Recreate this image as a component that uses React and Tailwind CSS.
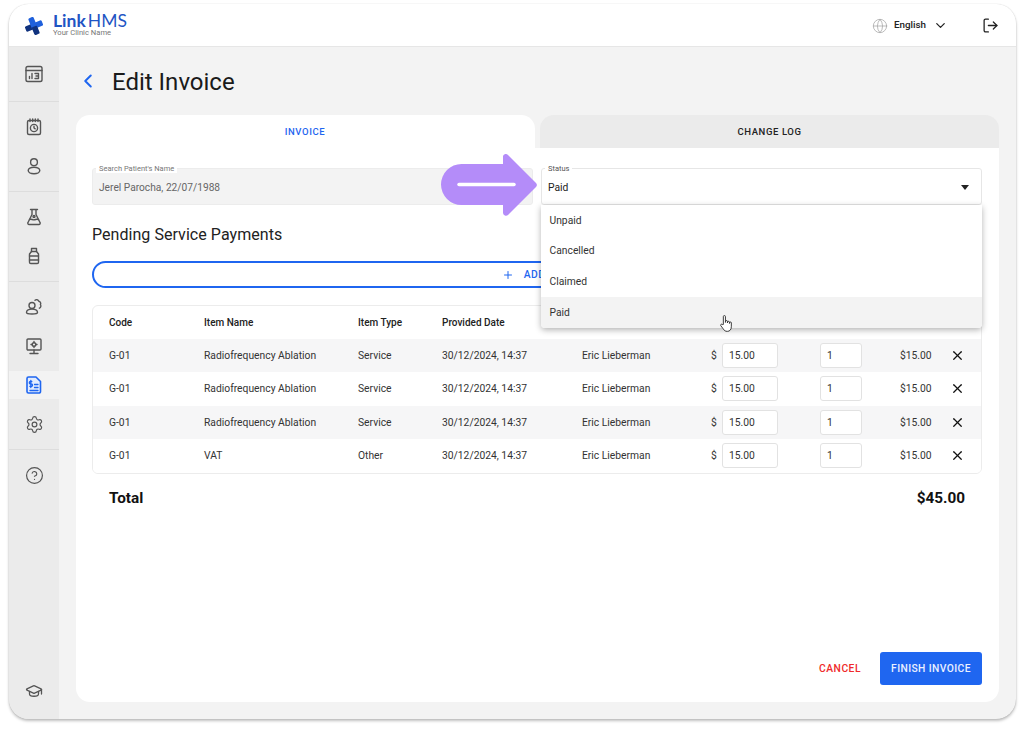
import { ChevronLeft, ChevronDown, LogOut, Globe, Plus, X, Settings, CircleHelp, GraduationCap } from 'lucide-react';

const ROWS = [
  { name: 'Radiofrequency Ablation', type: 'Service' },
  { name: 'Radiofrequency Ablation', type: 'Service' },
  { name: 'Radiofrequency Ablation', type: 'Service' },
  { name: 'VAT', type: 'Other' },
];

const tableCols = 'grid grid-cols-[95px_154px_84px_140px_129px_11px_98px_80px_25px] items-center pl-[16px]';

function Icon({ children }) {
  return (
    <svg width="20" height="20" viewBox="0 0 20 20" fill="none" stroke="currentColor" strokeWidth="1.4" strokeLinecap="round" strokeLinejoin="round">
      {children}
    </svg>
  );
}

function NavItem({ children, active }) {
  return (
    <div className="h-[39px] flex items-center">
      <div className={`w-full h-[28px] flex items-center justify-center ${active ? 'bg-[#f3f3f3] text-[#1f66f0]' : 'text-[#555555]'}`}>
        {children}
      </div>
    </div>
  );
}

function Sidebar() {
  return (
    <aside className="w-[50px] shrink-0 bg-[#ebebeb] flex flex-col">
      <div className="h-[55px] flex items-center justify-center border-b border-[#dddddd] text-[#555555]">
        <Icon>
          <rect x="2" y="2.500" width="16" height="15" rx="1.800" />
          <path d="M2 6.500h16M5.500 14.500v-2M8 14.500V9.500M11 9.500h3.500v5H11M12 12h2.500" />
        </Icon>
      </div>
      <div className="py-[5.500px] border-b border-[#dddddd]">
        <NavItem>
          <Icon>
            <rect x="3.500" y="3.500" width="13" height="14" rx="1.500" />
            <path d="M6 2v2.500M8.700 2v2.500M11.300 2v2.500M14 2v2.500" />
            <circle cx="10" cy="11" r="3.600" />
            <path d="M10 9.200V11l1.200.8" />
          </Icon>
        </NavItem>
        <NavItem>
          <Icon>
            <circle cx="10" cy="6.200" r="3.400" />
            <ellipse cx="10" cy="14.500" rx="5.800" ry="3.200" />
          </Icon>
        </NavItem>
      </div>
      <div className="py-[5.500px] border-b border-[#dddddd]">
        <NavItem>
          <Icon>
            <path d="M6.500 2.500h7M8 2.500v5L4 15.500a1.300 1.300 0 0 0 1.200 2h9.600a1.300 1.300 0 0 0 1.200-2L12 7.500v-5" />
            <path d="M5.500 12.500c2-1 3 .8 5 .3s2-.8 4-.3" />
            <circle cx="10" cy="9.500" r="1" />
          </Icon>
        </NavItem>
        <NavItem>
          <Icon>
            <path d="M7.500 2.500h5v3h-5z" />
            <path d="M7.500 5.500 5.500 8v8.200c0 .7.600 1.300 1.300 1.300h6.400c.7 0 1.300-.6 1.300-1.300V8l-2-2.500" />
            <path d="M5.500 10h9M5.500 14h9" />
          </Icon>
        </NavItem>
      </div>
      <div className="py-[5.500px] border-b border-[#dddddd]">
        <NavItem>
          <Icon>
            <circle cx="8" cy="8.500" r="3" />
            <path d="M2.500 15.500c0-2.200 2.400-3.400 5.500-3.400s5.500 1.200 5.500 3.400c0 1-2.400 1.500-5.500 1.500s-5.500-.5-5.500-1.500z" />
            <path d="M11 3.200c1-.9 3.300-.7 3.700 1 1.600.2 2.600 2 1.700 3.400.9 1 .5 3-1 3.600" />
          </Icon>
        </NavItem>
        <NavItem>
          <Icon>
            <rect x="3" y="3" width="14" height="11" rx="1" />
            <path d="M10 14v3M6 17.500h8" />
            <circle cx="10" cy="8.500" r="1.800" />
            <path d="M10 5.500v1M10 10.500v1M7 8.500h1M12 8.500h1" />
          </Icon>
        </NavItem>
        <NavItem active>
          <svg width="18" height="20" viewBox="0 0 18 20" fill="none" stroke="currentColor" strokeWidth="1.600" strokeLinecap="round" strokeLinejoin="round">
            <path d="M3.500 2h7.500L15.500 6.500V16.500a1.500 1.500 0 0 1-1.500 1.500H3.500A1.500 1.500 0 0 1 2 16.500V3.500A1.500 1.500 0 0 1 3.500 2z" fill="#e3ecfe" />
            <path d="M6.800 6.500H5.500a1.100 1.100 0 0 0 0 2.400h.8a1.100 1.100 0 0 1 0 2.400H4.800M5.800 5.500v7M9.500 9.500h3.500M9.500 12.500h3.500M5 15.500h8" strokeWidth="1.300" />
          </svg>
        </NavItem>
        <NavItem>
          <Settings size={19} strokeWidth={1.5} />
        </NavItem>
      </div>
      <div className="py-[5.500px] flex-1 flex flex-col justify-between">
        <NavItem>
          <CircleHelp size={19} strokeWidth={1.5} />
        </NavItem>
        <div className="mb-[3px]">
          <NavItem>
            <GraduationCap size={18} strokeWidth={1.7} />
          </NavItem>
        </div>
      </div>
    </aside>
  );
}

function Header() {
  return (
    <header className="h-[43px] shrink-0 bg-white border-b border-[#e6e6e6] flex items-center pl-[16px] pr-[17px]">
      <svg width="18" height="18" viewBox="0 0 19 19" className="mt-[2px]">
        <g transform="rotate(-22 9.500 9.500)">
          <rect x="0" y="6.500" width="12" height="6" rx="1.500" fill="#10327e" />
          <rect x="6.500" y="6.500" width="12.500" height="6" rx="1.500" fill="#1f60dc" />
          <rect x="6.500" y="0" width="6" height="10" rx="1.500" fill="#1f60dc" />
          <rect x="6.500" y="10" width="6" height="9" rx="1.500" fill="#10327e" />
        </g>
      </svg>
      <div className="ml-[10px] mt-[-1px] flex flex-col font-['Lato',sans-serif]">
        <div className="flex text-[17.500px] leading-[17px] text-[#1f55c4]">
          <span className="block font-bold">Link</span>
          <span className="block ml-[2px]">HMS</span>
        </div>
        <div className="text-[7.600px] leading-[8px] text-[#777777] font-['Roboto',sans-serif]">Your Clinic Name</div>
      </div>
      <div className="ml-auto flex items-center text-[#222222] mt-[1px]">
        <Globe size={16} strokeWidth={1.200} className="text-[#aaaaaa]" />
        <span className="ml-[6px] text-[9.800px] font-medium">English</span>
        <ChevronDown size={15} strokeWidth={2} className="ml-[7px]" />
        <LogOut size={17} strokeWidth={1.800} className="ml-[34px]" />
      </div>
    </header>
  );
}

function Table() {
  return (
    <div className="mt-[17px] border border-[#ececec] rounded-[6px] overflow-hidden text-[10.300px] text-[#333333]">
      <div className={`${tableCols} h-[32.500px] text-[10px] font-medium text-[#222222]`}>
        <span>Code</span>
        <span>Item Name</span>
        <span>Item Type</span>
        <span>Provided Date</span>
      </div>
      {ROWS.map((r, i) => (
        <div key={i} className={`${tableCols} h-[33.500px] ${i % 2 === 0 ? 'bg-[#f6f6f7]' : 'bg-white'}`}>
          <span>G-01</span>
          <span>{r.name}</span>
          <span>{r.type}</span>
          <span>30/12/2024, 14:37</span>
          <span>Eric Lieberman</span>
          <span>$</span>
          <span className="w-[56px] h-[25px] bg-white border border-[#e2e2e2] rounded-[3px] flex items-center pl-[6px]">15.00</span>
          <span className="w-[42px] h-[25px] bg-white border border-[#e2e2e2] rounded-[3px] flex items-center pl-[6px]">1</span>
          <span className="flex items-center">
            $15.00
            <X size={15} strokeWidth={2} className="ml-[18px] shrink-0 text-[#111111]" />
          </span>
        </div>
      ))}
    </div>
  );
}

function StatusDropdown() {
  const options = ['Unpaid', 'Cancelled', 'Claimed', 'Paid'];
  return (
    <div className="absolute top-[calc(100%+1px)] left-[-1px] right-[-1px] bg-white rounded-b-[4px] shadow-[0_2px_6px_rgba(0,0,0,0.3)] text-[10.300px] text-[#333333] z-10">
      {options.map((o) => (
        <div key={o} className={`h-[30.800px] flex items-center pl-[8.500px] ${o === 'Paid' ? 'bg-[#f3f3f3] rounded-b-[4px]' : ''}`}>{o}</div>
      ))}
      <svg width="15" height="20" viewBox="0 0 14 19" className="absolute left-[178px] bottom-[-6px]" fill="#ffffff" stroke="#333333" strokeWidth="0.900" strokeLinejoin="round">
        <path d="M4 10V2.500a1 1 0 0 1 2 0V8l.2-1.200a.9.9 0 0 1 1.700 0V8.500l.2-1a.9.9 0 0 1 1.700.1V9l.2-.7a.8.8 0 0 1 1.600.2v3.700c0 2.500-1.500 4.300-3.800 4.300-2 0-3-.8-4-2.500L1.500 11c-.5-1 .8-1.800 1.500-1z" />
      </svg>
    </div>
  );
}

function Card() {
  return (
    <div className="relative flex-1 flex flex-col">
      <div className="flex gap-[5px] h-[33px] shrink-0">
        <div className="flex-1 bg-white rounded-t-[14px] flex items-center justify-center text-[9.500px] font-medium tracking-[0.6px] text-[#1f66f0]">
          <span className="mt-[1px] mr-[1px]">INVOICE</span>
        </div>
        <div className="flex-1 bg-[#ebebeb] rounded-t-[14px] flex items-center justify-center text-[9.500px] font-medium tracking-[0.6px] text-[#222222]">
          <span className="mt-[1px]">CHANGE LOG</span>
        </div>
      </div>
      <div className="flex-1 bg-white rounded-b-[14px] pt-[20px] pl-[16px] pr-[17px] pb-[17px] flex flex-col">
        <div className="grid grid-cols-[441px_441px] gap-[8px]">
          <div className="relative h-[37px] bg-[#f3f3f3] border border-[#ececec] rounded-[3px] flex items-center pl-[6px] text-[10.200px] text-[#666666]">
            <span className="absolute left-[3px] top-[-4px] px-[3px] bg-white text-[7.500px] leading-[8px] text-[#777777]">Search Patient's Name</span>
            <span className="mt-[2px]">Jerel Parocha, 22/07/1988</span>
          </div>
          <div className="relative h-[37px] bg-white border border-[#e6e6e6] rounded-[3px] flex items-center pl-[6px] text-[10.300px] text-[#222222]">
            <span className="absolute left-[3px] top-[-4px] px-[3px] bg-white text-[7.500px] leading-[8px] text-[#555555]">Status</span>
            <span className="mt-[2px]">Paid</span>
            <svg width="8" height="5" viewBox="0 0 8 5" className="absolute right-[12px] top-[16px]">
              <path d="M0 0h8L4 5z" fill="#222222" />
            </svg>
            <StatusDropdown />
          </div>
        </div>
        <h2 className="mt-[20px] text-[16px] leading-[19px] text-[#222222] tracking-[0.05px]">Pending Service Payments</h2>
        <div className="mt-[17px] h-[27px] border-2 border-[#1f66f0] rounded-full flex items-center justify-center gap-[10px] pl-[2px] text-[10.300px] font-medium tracking-[0.5px] text-[#1f66f0]">
          <Plus size={12} strokeWidth={2} />
          <span>ADD ITEM</span>
        </div>
        <Table />
        <div className="mt-[14.500px] flex items-center justify-between pl-[17px] pr-[17px] text-[15.300px] leading-[20px] font-bold text-[#111111]">
          <span>Total</span>
          <span>$45.00</span>
        </div>
        <div className="mt-auto flex items-center justify-end">
          <span className="text-[10.300px] font-medium tracking-[0.5px] text-[#ef2b2b]">CANCEL</span>
          <div className="ml-[19px] w-[102px] h-[33px] bg-[#1f66f0] rounded-[3px] flex items-center justify-center text-[10.300px] font-medium tracking-[0.4px] text-[#eaf0ff]">FINISH INVOICE</div>
        </div>
      </div>
      {/* arrow pointing at the status field */}
      <svg width="97" height="64" viewBox="0 0 97 64" className="absolute left-[365px] top-[38px] z-20">
        <path d="M62 3a3 3 0 0 1 5-1l28 28a3 3 0 0 1 0 4L67 62a3 3 0 0 1-5-2V52H20.500a20.500 20.500 0 0 1 0-41H62z" fill="#b48cf9" />
        <path d="M18 31.500h55" stroke="#ffffff" strokeWidth="3.500" strokeLinecap="round" />
      </svg>
    </div>
  );
}

export default function App() {
  return (
    <div className="w-[1024px] h-[733px] bg-white pt-[4px] pl-[9px] font-['Roboto',sans-serif]">
      <div className="w-[1007px] h-[715px] rounded-[20px] overflow-hidden flex flex-col bg-[#f3f3f3] shadow-[0_2px_3px_rgba(0,0,0,0.25),0_0_1px_rgba(0,0,0,0.25)]">
        <Header />
        <div className="flex-1 flex min-h-0">
          <Sidebar />
          <main className="flex-1 flex flex-col pl-[17px] pr-[17px] pb-[17px]">
            <div className="h-[68px] flex items-center shrink-0">
              <ChevronLeft size={22} strokeWidth={2.200} className="text-[#1f66f0] ml-[1px]" />
              <h1 className="ml-[13px] mt-[1px] text-[24px] leading-[28px] text-[#1a1a1a]">Edit Invoice</h1>
            </div>
            <Card />
          </main>
        </div>
      </div>
    </div>
  );
}
